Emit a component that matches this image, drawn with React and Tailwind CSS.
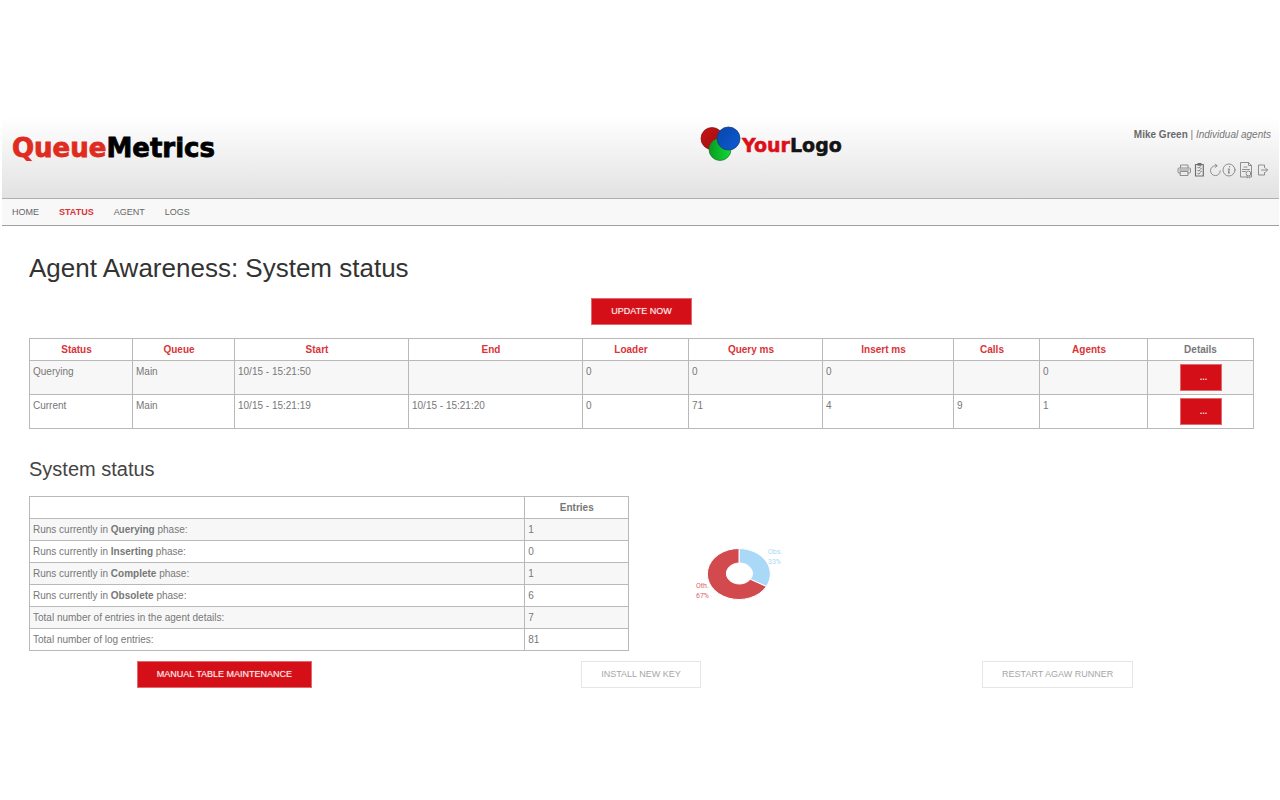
const columns = [
  { label: 'Status', width: 'w-[103px]' },
  { label: 'Queue', width: 'w-[102px]' },
  { label: 'Start', width: 'w-[174px]' },
  { label: 'End', width: 'w-[174px]' },
  { label: 'Loader', width: 'w-[106px]' },
  { label: 'Query ms', width: 'w-[134px]' },
  { label: 'Insert ms', width: 'w-[131px]' },
  { label: 'Calls', width: 'w-[86px]' },
  { label: 'Agents', width: 'w-[108px]' },
  { label: 'Details', width: 'w-[106px]', plain: true },
];

const runs = [
  ['Querying', 'Main', '10/15 - 15:21:50', '', '0', '0', '0', '', '0'],
  ['Current', 'Main', '10/15 - 15:21:19', '10/15 - 15:21:20', '0', '71', '4', '9', '1'],
];

const entries = [
  [<>Runs currently in <b>Querying</b> phase:</>, '1'],
  [<>Runs currently in <b>Inserting</b> phase:</>, '0'],
  [<>Runs currently in <b>Complete</b> phase:</>, '1'],
  [<>Runs currently in <b>Obsolete</b> phase:</>, '6'],
  ['Total number of entries in the agent details:', '7'],
  ['Total number of log entries:', '81'],
];

const navItems = ['Home', 'Status', 'Agent', 'Logs'];

function BrandLogo() {
  return (
    <svg width="214" height="44" viewBox="0 0 214 44" role="img" aria-label="QueueMetrics">
      <text x="0" y="30" fontFamily="'DejaVu Sans', sans-serif" fontWeight="700" fontSize="26" strokeWidth="0.8">
        <tspan fill="#e02b20" stroke="#e02b20">Queue</tspan>
        <tspan fill="#000" stroke="#000">Metrics</tspan>
      </text>
    </svg>
  );
}

function CustomerLogo() {
  return (
    <svg width="146" height="36" viewBox="0 0 146 36" role="img" aria-label="YourLogo">
      <defs>
        <linearGradient id="lr" x1="0" y1="0" x2="1" y2="1">
          <stop offset="0" stopColor="#c81414" />
          <stop offset="1" stopColor="#a00c0c" />
        </linearGradient>
        <linearGradient id="lg" x1="0" y1="0" x2="1" y2="0">
          <stop offset="0" stopColor="#0a9a24" />
          <stop offset="1" stopColor="#10dc30" />
        </linearGradient>
        <linearGradient id="lb" x1="0" y1="0" x2="1" y2="1">
          <stop offset="0" stopColor="#0b45a8" />
          <stop offset="1" stopColor="#0a5cd6" />
        </linearGradient>
      </defs>
      <circle cx="12" cy="12.500" r="11" fill="url(#lr)" stroke="#7d1515" strokeWidth="0.700" />
      <circle cx="20" cy="23.500" r="11" fill="url(#lg)" stroke="#2c6e33" strokeWidth="0.700" />
      <circle cx="28.500" cy="12.500" r="11.500" fill="url(#lb)" stroke="#1b3a72" strokeWidth="0.700" />
      <text x="42" y="26" fontFamily="'DejaVu Sans', sans-serif" fontWeight="700" fontSize="19" strokeWidth="0.5">
        <tspan fill="#dc0f19" stroke="#dc0f19">Your</tspan>
        <tspan fill="#141414" stroke="#141414">Logo</tspan>
      </text>
    </svg>
  );
}

function ToolButton({ label, width, children }) {
  return (
    <button type="button" aria-label={label} className="cursor-pointer">
      <svg
        width={width}
        height="18"
        viewBox={`0 0 ${width} 18`}
        fill="none"
        stroke="#858585"
        strokeWidth="0.9"
        strokeLinejoin="round"
        strokeLinecap="round"
      >
        {children}
      </svg>
    </button>
  );
}

function Toolbar() {
  return (
    <div className="flex items-center pr-0.5">
      <ToolButton label="Print" width={18}>
        <path d="M4.500 7V4h7.500v3M4.500 12H3a1 1 0 0 1-1-1V8a1 1 0 0 1 1-1h10.500a1 1 0 0 1 1 1v3a1 1 0 0 1-1 1H12M4.500 10.500h7.500v4H4.500zM3.500 9h9.500" />
      </ToolButton>
      <ToolButton label="Report" width={15}>
        <path strokeWidth="1.200" stroke="#6f6f6f" d="M1.500 3.500h7.800v11.500H1.500zM4 2.600h3v1.600H4z" />
        <path strokeWidth="0.800" stroke="#555" d="M3.800 6.300l.8.800L6.200 5.800M3.800 9.300l.8.800L6.200 8.800M3.800 12.300l.8.800L6.200 11.800M6.800 7.300h.6M6.800 10.300h.6" />
      </ToolButton>
      <ToolButton label="Reload" width={13}>
        <path d="M11.300 9.800a4.900 4.900 0 1 1-4.900-5h1.600M6.200 3.200l1.900 1.600-1.900 1.600" />
      </ToolButton>
      <ToolButton label="Info" width={16}>
        <circle cx="7" cy="9" r="6" />
        <path strokeWidth="1.200" d="M6.300 8h1l-.8 3.800h1M7.600 5.500v.3" />
      </ToolButton>
      <ToolButton label="License" width={18}>
        <path d="M8.500 16H2.500V1.500h8l3 3v11.500h-.6M10.500 1.500v3h3M6 6h3M4.500 8.500h7M4.500 10.500h3" />
        <circle cx="10.500" cy="12.500" r="2.400" />
        <path d="M9.200 14.700V17l1.300-.7 1.300.7v-2.300" />
      </ToolButton>
      <ToolButton label="Log out" width={13}>
        <path d="M8.500 6.500V4H2.500v10h6v-2.500M5.500 9h6M9.500 7L11.500 9 9.500 11" />
      </ToolButton>
    </div>
  );
}

function RedButton({ children }) {
  return (
    <button type="button" className="h-[27px] cursor-pointer border border-[#e06a6e] bg-[#d50f17] px-[19px] text-[9px] text-[#fdeaea] text-shadow-[0_0_1px_#ffffff80]">
      {children}
    </button>
  );
}

function PlainButton({ children }) {
  return (
    <button type="button" disabled className="h-[27px] border border-[#e6e6e6] bg-white px-[19px] text-[9px] text-[#a6a6a6]">
      {children}
    </button>
  );
}

function PhaseChart() {
  return (
    <svg width="100" height="64" viewBox="0 0 100 64" role="img" aria-label="Obs. 33%, Oth. 67%">
      <path d="M47 6.500A31.500 25.500 0 0 1 74.300 44.500L58.260 37.250A13 10.500 0 0 0 47 21z" fill="#a9d9f6" stroke="#fff" />
      <path d="M47 6.500A31.500 25.500 0 1 0 74.300 44.500L58.260 37.250A13 10.500 0 1 1 47 21z" fill="#d2494e" stroke="#fff" />
      <g fontFamily="Roboto, sans-serif" fontSize="7">
        <g fill="#a9d9f6">
          <text x="76" y="12">Obs.</text>
          <text x="76" y="22">33%</text>
        </g>
        <g fill="#d9666a">
          <text x="4" y="46">Oth.</text>
          <text x="4" y="56">67%</text>
        </g>
      </g>
    </svg>
  );
}

const cell = 'border border-[#b9b9b9] py-[3px] pl-[3px] align-top';

export default function App() {
  return (
    <div className="min-h-screen bg-white pt-[117px] pr-px pb-10 pl-0.5 font-['Liberation_Sans',Arial,sans-serif] text-[10px] leading-[15px] text-[#777]">
      <header className="flex h-[82px] items-start justify-between border-b border-[#b0b0b0] bg-linear-to-b from-white to-[#e2e2e2] pr-2 pl-2.5">
        <div className="flex-1 pt-2.5">
          <BrandLogo />
        </div>
        <div className="pt-[9px]">
          <CustomerLogo />
        </div>
        <div className="flex w-[425px] flex-col items-end gap-[19px] pt-2.5">
          <p>
            <b className="text-[#6a6a6a]">Mike Green</b> | <i>Individual agents</i>
          </p>
          <Toolbar />
        </div>
      </header>
      <nav className="flex h-[27px] items-center gap-5 border-b border-[#a0a0a0] bg-[#f8f8f8] px-2.5 text-[9px] uppercase">
        {navItems.map((item) => (
          <a key={item} href={`#${item.toLowerCase()}`} className={item === 'Status' ? 'font-bold text-[#d93438]' : 'text-[#666]'}>
            {item}
          </a>
        ))}
      </nav>

      <main>
        <div className="pr-[25px] pl-[27px]">
          <h1 className="pt-6 text-[26px] leading-9 text-[#333]">Agent Awareness: System status</h1>
          <div className="flex justify-center pt-3 pb-[13px]">
            <RedButton>UPDATE NOW</RedButton>
          </div>
          <table className="w-full table-fixed border-collapse">
            <thead>
              <tr>
                {columns.map((c) => (
                  <th
                    key={c.label}
                    scope="col"
                    className={`${cell} ${c.width} ${c.plain ? 'pr-[3px]' : 'pr-3 text-[#d93438]'}`}
                  >
                    {c.plain ? c.label : <a href={`#sort-${c.label}`}>{c.label}</a>}
                  </th>
                ))}
              </tr>
            </thead>
            <tbody>
              {runs.map((run) => (
                <tr key={run[0]} className="odd:bg-[#f7f7f7]">
                  {run.map((value, i) => (
                    <td key={i} className={`${cell} pr-[3px]`}>{value}</td>
                  ))}
                  <td className={`${cell} pr-[3px]`}>
                    <div className="flex justify-center">
                      <button
                        type="button"
                        aria-label={`Details of ${run[0]}`}
                        className="h-[27px] w-[42px] cursor-pointer border border-[#e06a6e] bg-[#d50f17] pl-1.5 text-[9px] font-bold text-[#fbdcdd]"
                      >
                        ...
                      </button>
                    </div>
                  </td>
                </tr>
              ))}
            </tbody>
          </table>

          <h2 className="pt-[27px] pb-3.5 text-[20px] leading-[26px] text-[#444]">System status</h2>
          <div className="flex items-center">
            <table className="w-[49%] table-fixed border-collapse">
              <thead>
                <tr>
                  <th className={cell} aria-label="Measure" />
                  <th scope="col" className={`${cell} w-[104px] pr-[3px]`}>Entries</th>
                </tr>
              </thead>
              <tbody>
                {entries.map(([label, value], i) => (
                  <tr key={i} className="odd:bg-[#f7f7f7]">
                    <td className={`${cell} pr-[3px]`}>{label}</td>
                    <td className={`${cell} pr-[3px]`}>{value}</td>
                  </tr>
                ))}
              </tbody>
            </table>
            <div className="pl-[63px]">
              <PhaseChart />
            </div>
          </div>
        </div>
        <div className="grid grid-cols-3 justify-items-center pt-2.5 pr-[13px] pl-3.5">
          <RedButton>MANUAL TABLE MAINTENANCE</RedButton>
          <PlainButton>INSTALL NEW KEY</PlainButton>
          <PlainButton>RESTART AGAW RUNNER</PlainButton>
        </div>
      </main>
    </div>
  );
}
